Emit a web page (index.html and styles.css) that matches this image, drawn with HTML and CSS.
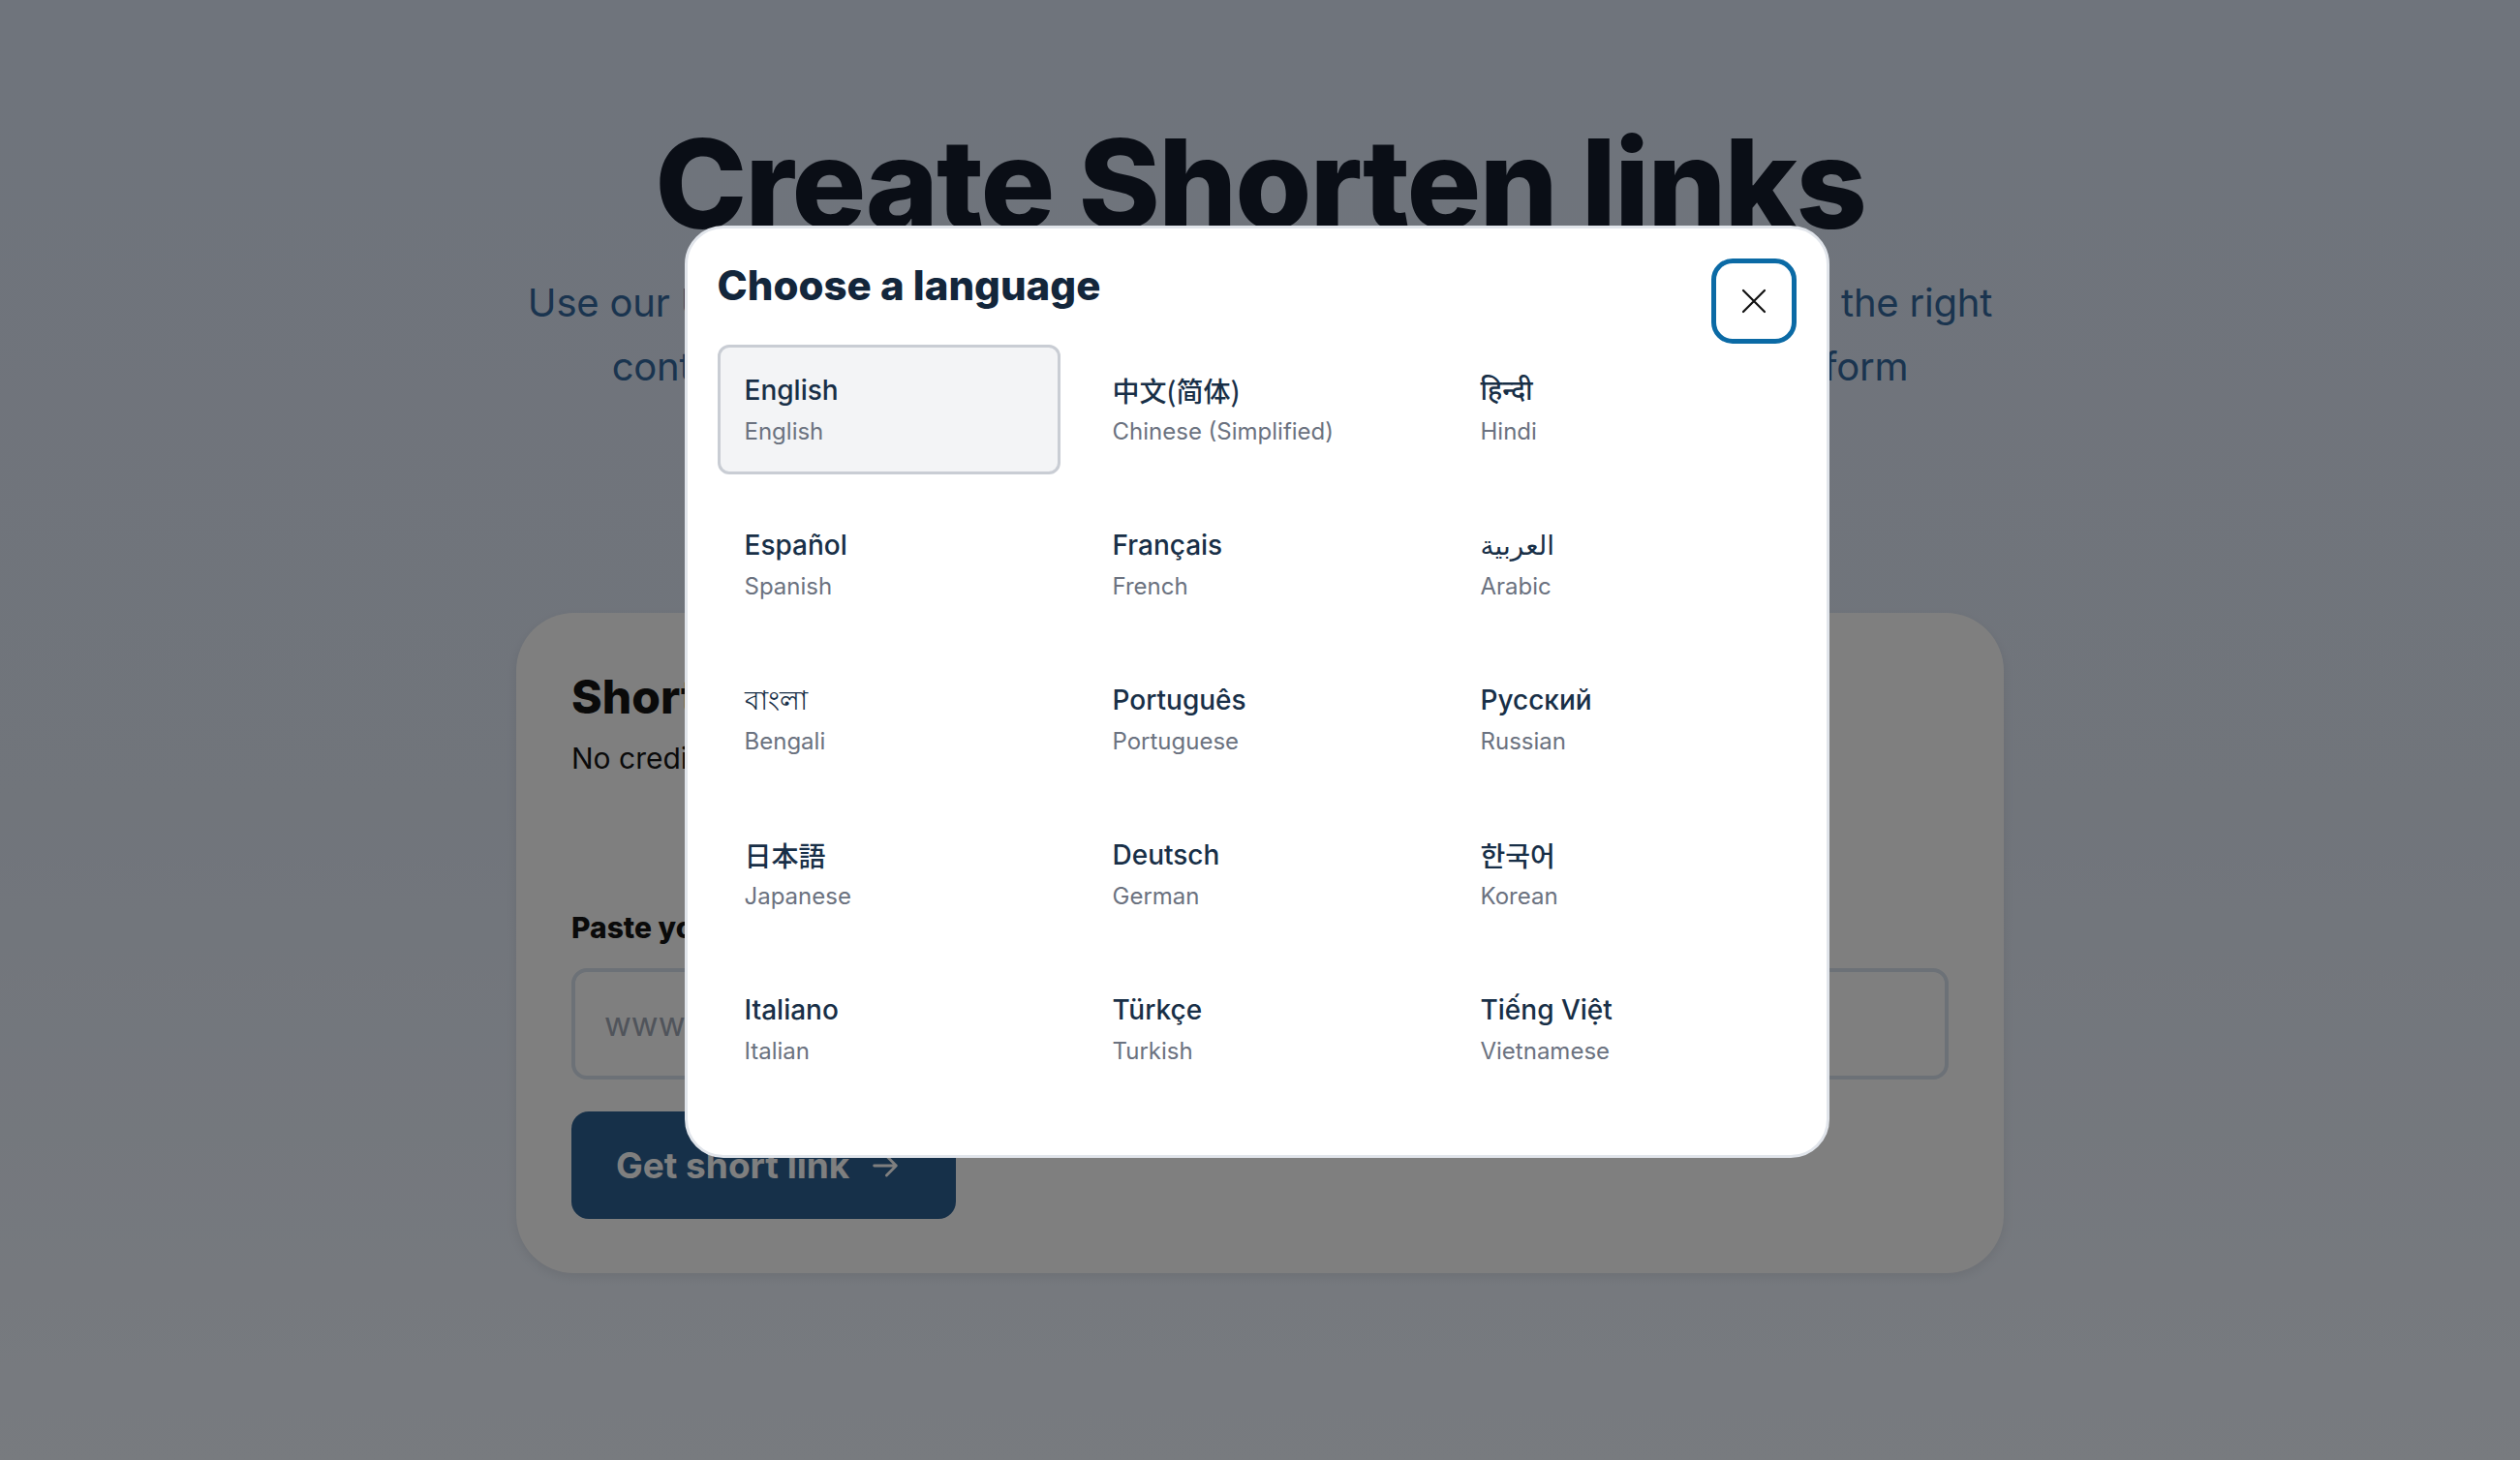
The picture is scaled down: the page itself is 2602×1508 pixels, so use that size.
FILE: index.html
```html
<!DOCTYPE html>
<html lang="en">
<head>
    <meta charset="UTF-8">
    <meta name="viewport" content="width=device-width, initial-scale=1.0">
    <title>Create Shorten links</title>
    <link rel="stylesheet" href="styles.css">
</head>
<body>

    <!-- Page behind the dialog -->
    <main class="page">
        <section class="hero">
            <h1 class="hero-title">Create Shorten links</h1>
            <p class="hero-text">Use our URL shortener to create short links with custom slugs that go to the right<br>content, reach more people and track every click on any social platform</p>
        </section>

        <section class="shorten-card">
            <h2>Shorten a long link</h2>
            <p class="shorten-note">No credit card required.</p>
            <label for="long-url">Paste your long link here</label>
            <input type="text" id="long-url" placeholder="www.example.com/my-long-url">
            <button class="shorten-btn" type="button">
                Get short link
                <svg width="34" height="34" viewBox="0 0 24 24" fill="none" stroke="currentColor" stroke-width="2" stroke-linecap="round" stroke-linejoin="round"><path d="M4 12h16M13 5l7 7-7 7"/></svg>
            </button>
        </section>
    </main>

    <!-- Language dialog -->
    <div class="overlay">
        <div class="modal">
            <div class="modal-header">
                <h2>Choose a language</h2>
                <button class="close-btn" type="button" aria-label="Close">
                    <svg width="26" height="26" viewBox="0 0 26 26" fill="none" stroke="currentColor" stroke-width="2.2" stroke-linecap="round"><path d="M2 2l22 22M24 2L2 24"/></svg>
                </button>
            </div>

            <div class="lang-grid">
                <div class="lang-item active"><span class="lang-name">English</span><span class="lang-sub">English</span></div>
                <div class="lang-item"><span class="lang-name" lang="zh-CN">中文(简体)</span><span class="lang-sub">Chinese (Simplified)</span></div>
                <div class="lang-item"><span class="lang-name" lang="hi">हिन्दी</span><span class="lang-sub">Hindi</span></div>

                <div class="lang-item"><span class="lang-name">Español</span><span class="lang-sub">Spanish</span></div>
                <div class="lang-item"><span class="lang-name">Français</span><span class="lang-sub">French</span></div>
                <div class="lang-item"><span class="lang-name" lang="ar">العربية</span><span class="lang-sub">Arabic</span></div>

                <div class="lang-item"><span class="lang-name" lang="bn">বাংলা</span><span class="lang-sub">Bengali</span></div>
                <div class="lang-item"><span class="lang-name">Português</span><span class="lang-sub">Portuguese</span></div>
                <div class="lang-item"><span class="lang-name">Русский</span><span class="lang-sub">Russian</span></div>

                <div class="lang-item"><span class="lang-name" lang="ja">日本語</span><span class="lang-sub">Japanese</span></div>
                <div class="lang-item"><span class="lang-name">Deutsch</span><span class="lang-sub">German</span></div>
                <div class="lang-item"><span class="lang-name" lang="ko">한국어</span><span class="lang-sub">Korean</span></div>

                <div class="lang-item"><span class="lang-name">Italiano</span><span class="lang-sub">Italian</span></div>
                <div class="lang-item"><span class="lang-name">Türkçe</span><span class="lang-sub">Turkish</span></div>
                <div class="lang-item"><span class="lang-name">Tiếng Việt</span><span class="lang-sub">Vietnamese</span></div>
            </div>
        </div>
    </div>

</body>
</html>
```

FILE: styles.css
```css
/* Base */
body {
    font-family: Inter, "Noto Sans", "DejaVu Sans", "Noto Sans CJK SC", sans-serif;
    background: linear-gradient(180deg, #dee8f8 0%, #e2eaf7 55%, #f0f6ff 100%);
    margin: 0;
    padding: 0;
    min-height: 1508px;
    color: #141c2c;
}

.page {
    padding-top: 113px;
}

/* Hero */
.hero {
    text-align: center;
}

.hero-title {
    font-size: 128px;
    font-weight: 800;
    line-height: 1.2;
    letter-spacing: -2px;
    color: #141c2c;
    margin: 0;
}

.hero-text {
    font-size: 40px;
    line-height: 66px;
    letter-spacing: -0.2px;
    color: #35699e;
    margin: 13px 0 0;
}

/* Shorten card */
.shorten-card {
    max-width: 1536px;
    box-sizing: border-box;
    margin: 221px auto 0;
    padding: 58px 57px 56px;
    background-color: white;
    border-radius: 60px;
    box-shadow: 0 4px 12px rgba(0, 0, 0, 0.08);
}

.shorten-card h2 {
    font-size: 48px;
    font-weight: 800;
    line-height: 1.2;
    color: #141414;
    margin: 0;
}

.shorten-note {
    font-size: 30px;
    line-height: 45px;
    color: #141414;
    margin: 13px 0 0;
}

.shorten-card label {
    display: block;
    font-size: 30px;
    font-weight: 800;
    line-height: 45px;
    color: #141414;
    margin-top: 130px;
}

.shorten-card input {
    display: block;
    width: 100%;
    height: 115px;
    box-sizing: border-box;
    margin-top: 19px;
    padding: 0 30px;
    border: 4px solid #d8e2ee;
    border-radius: 16px;
    font-family: inherit;
    font-size: 34px;
    background: white;
}

.shorten-card input::placeholder {
    color: #a0a8b6;
}

.shorten-btn {
    display: flex;
    align-items: center;
    gap: 20px;
    width: 397px;
    height: 111px;
    margin-top: 33px;
    padding: 0 0 0 46px;
    border: none;
    border-radius: 18px;
    background-color: #2c6092;
    color: #ffffff;
    font-family: inherit;
    font-size: 37px;
    font-weight: 700;
    cursor: pointer;
}

/* Dialog */
.overlay {
    position: fixed;
    inset: 0;
    background-color: rgba(0, 0, 0, 0.5);
    display: flex;
    justify-content: center;
    align-items: flex-start;
    padding-top: 233px;
}

.modal {
    width: 1182px;
    box-sizing: border-box;
    margin-left: -7px;
    padding: 31px 31px 63px;
    background-color: white;
    border: 3px solid #e1e5eb;
    border-radius: 40px;
}

.modal-header {
    display: flex;
    justify-content: space-between;
    align-items: flex-start;
    height: 89px;
}

.modal-header h2 {
    font-size: 42px;
    font-weight: 800;
    line-height: 50px;
    color: #13263b;
    margin: 3px 0 0;
}

.close-btn {
    width: 88px;
    height: 88px;
    box-sizing: border-box;
    display: flex;
    align-items: center;
    justify-content: center;
    border: 5px solid #0b6aa5;
    border-radius: 22px;
    background-color: white;
    color: #111111;
    padding: 0;
    cursor: pointer;
}

.lang-grid {
    display: grid;
    grid-template-columns: repeat(3, 354px);
    gap: 26px;
}

.lang-item {
    display: flex;
    flex-direction: column;
    height: 134px;
    box-sizing: border-box;
    padding: 26px 25px 0;
    border: 3px solid transparent;
    border-radius: 12px;
}

.lang-item.active {
    background-color: #f3f4f6;
    border-color: #c9cdd4;
}

.lang-name {
    font-size: 28px;
    font-weight: 500;
    line-height: 36px;
    color: #182f47;
}

.lang-sub {
    font-size: 24px;
    line-height: 34px;
    color: #6b7280;
    margin-top: 8px;
}

.lang-name:lang(zh-CN) {
    font-family: "Noto Sans CJK SC", sans-serif;
}

.lang-name:lang(ja) {
    font-family: "Noto Sans CJK JP", sans-serif;
}

.lang-name:lang(ko) {
    font-family: "Noto Sans CJK KR", sans-serif;
}
```
